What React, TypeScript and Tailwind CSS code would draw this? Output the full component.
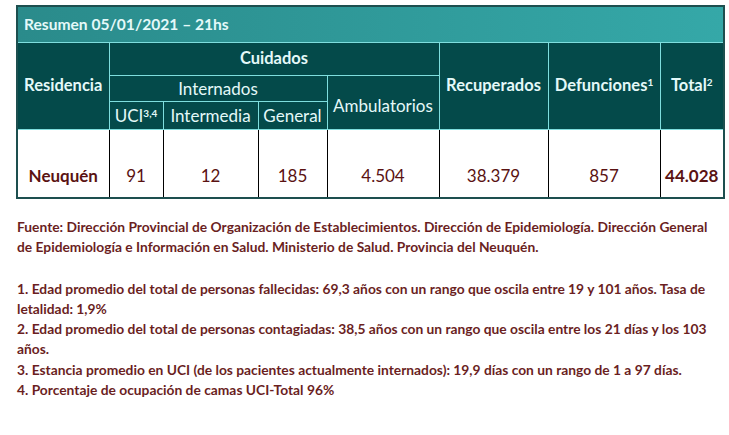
const headBorder = "border border-[#7fdede]";
const bodyCell = "border-x border-black align-bottom pb-[8px] text-center text-[17px] text-[#5a1212]";

export default function App() {
  return (
    <div className="w-[729px] h-[435px] bg-white pt-[5px] pl-[16px] font-['Lato',sans-serif]">
      <table className="border-collapse border-2 border-[#1d4f4f] table-fixed w-[707px]">
        <colgroup>
          <col className="w-[92px]" />
          <col className="w-[54px]" />
          <col className="w-[95px]" />
          <col className="w-[69px]" />
          <col className="w-[112px]" />
          <col className="w-[109px]" />
          <col className="w-[112px]" />
          <col className="w-[64px]" />
        </colgroup>
        <thead className="text-[#e4f9f9]">
          <tr className="h-[36px]">
            <th
              colSpan={8}
              className="border-b border-[#7fdede] bg-gradient-to-r from-[#2a8b8b] to-[#35a8a8] px-[6px] text-left text-[15.6px] font-bold"
            >
              Resumen 05/01/2021 – 21hs
            </th>
          </tr>
          <tr className="h-[33px] bg-[#044a4a]">
            <th rowSpan={3} className={`${headBorder} text-[16.5px] font-bold`}>
              Residencia
            </th>
            <th colSpan={4} className={`${headBorder} text-[16.5px] font-bold`}>
              Cuidados
            </th>
            <th rowSpan={3} className={`${headBorder} text-[16.5px] font-bold`}>
              Recuperados
            </th>
            <th rowSpan={3} className={`${headBorder} text-[16.5px] font-bold`}>
              Defunciones<sup className="text-[10px]">1</sup>
            </th>
            <th rowSpan={3} className={`${headBorder} text-[16.5px] font-bold`}>
              Total<sup className="text-[10px]">2</sup>
            </th>
          </tr>
          <tr className="h-[26px] bg-[#044a4a]">
            <th colSpan={3} className={`${headBorder} text-[17px] font-normal`}>
              Internados
            </th>
            <th rowSpan={2} className={`${headBorder} text-[17px] font-normal pt-[6px]`}>
              Ambulatorios
            </th>
          </tr>
          <tr className="h-[28px] bg-[#044a4a]">
            <th className={`${headBorder} text-[17px] font-normal`}>
              UCI<sup className="text-[10px] font-bold">3,4</sup>
            </th>
            <th className={`${headBorder} text-[17px] font-normal`}>Intermedia</th>
            <th className={`${headBorder} text-[17px] font-normal`}>General</th>
          </tr>
        </thead>
        <tbody>
          <tr className="h-[68px]">
            <td className={`${bodyCell} font-bold`}>Neuquén</td>
            <td className={bodyCell}>91</td>
            <td className={bodyCell}>12</td>
            <td className={bodyCell}>185</td>
            <td className={bodyCell}>4.504</td>
            <td className={bodyCell}>38.379</td>
            <td className={bodyCell}>857</td>
            <td className={`${bodyCell} font-bold`}>44.028</td>
          </tr>
        </tbody>
      </table>

      <div className="mt-[18px] pl-[1px] text-[13.8px] leading-[20px] font-bold text-[#6b1f1f] whitespace-nowrap">
        <p>
          Fuente: Dirección Provincial de Organización de Establecimientos. Dirección de Epidemiología. Dirección General
        </p>
        <p>de Epidemiología e Información en Salud. Ministerio de Salud. Provincia del Neuquén.</p>
        <p className="mt-[22px]">
          1. Edad promedio del total de personas fallecidas: 69,3 años con un rango que oscila entre 19 y 101 años. Tasa de
        </p>
        <p>letalidad: 1,9%</p>
        <p>
          2. Edad promedio del total de personas contagiadas: 38,5 años con un rango que oscila entre los 21 días y los 103
        </p>
        <p>años.</p>
        <p className="mt-[1px]">
          3. Estancia promedio en UCI (de los pacientes actualmente internados): 19,9 días con un rango de 1 a 97 días.
        </p>
        <p>4. Porcentaje de ocupación de camas UCI-Total 96%</p>
      </div>
    </div>
  );
}
